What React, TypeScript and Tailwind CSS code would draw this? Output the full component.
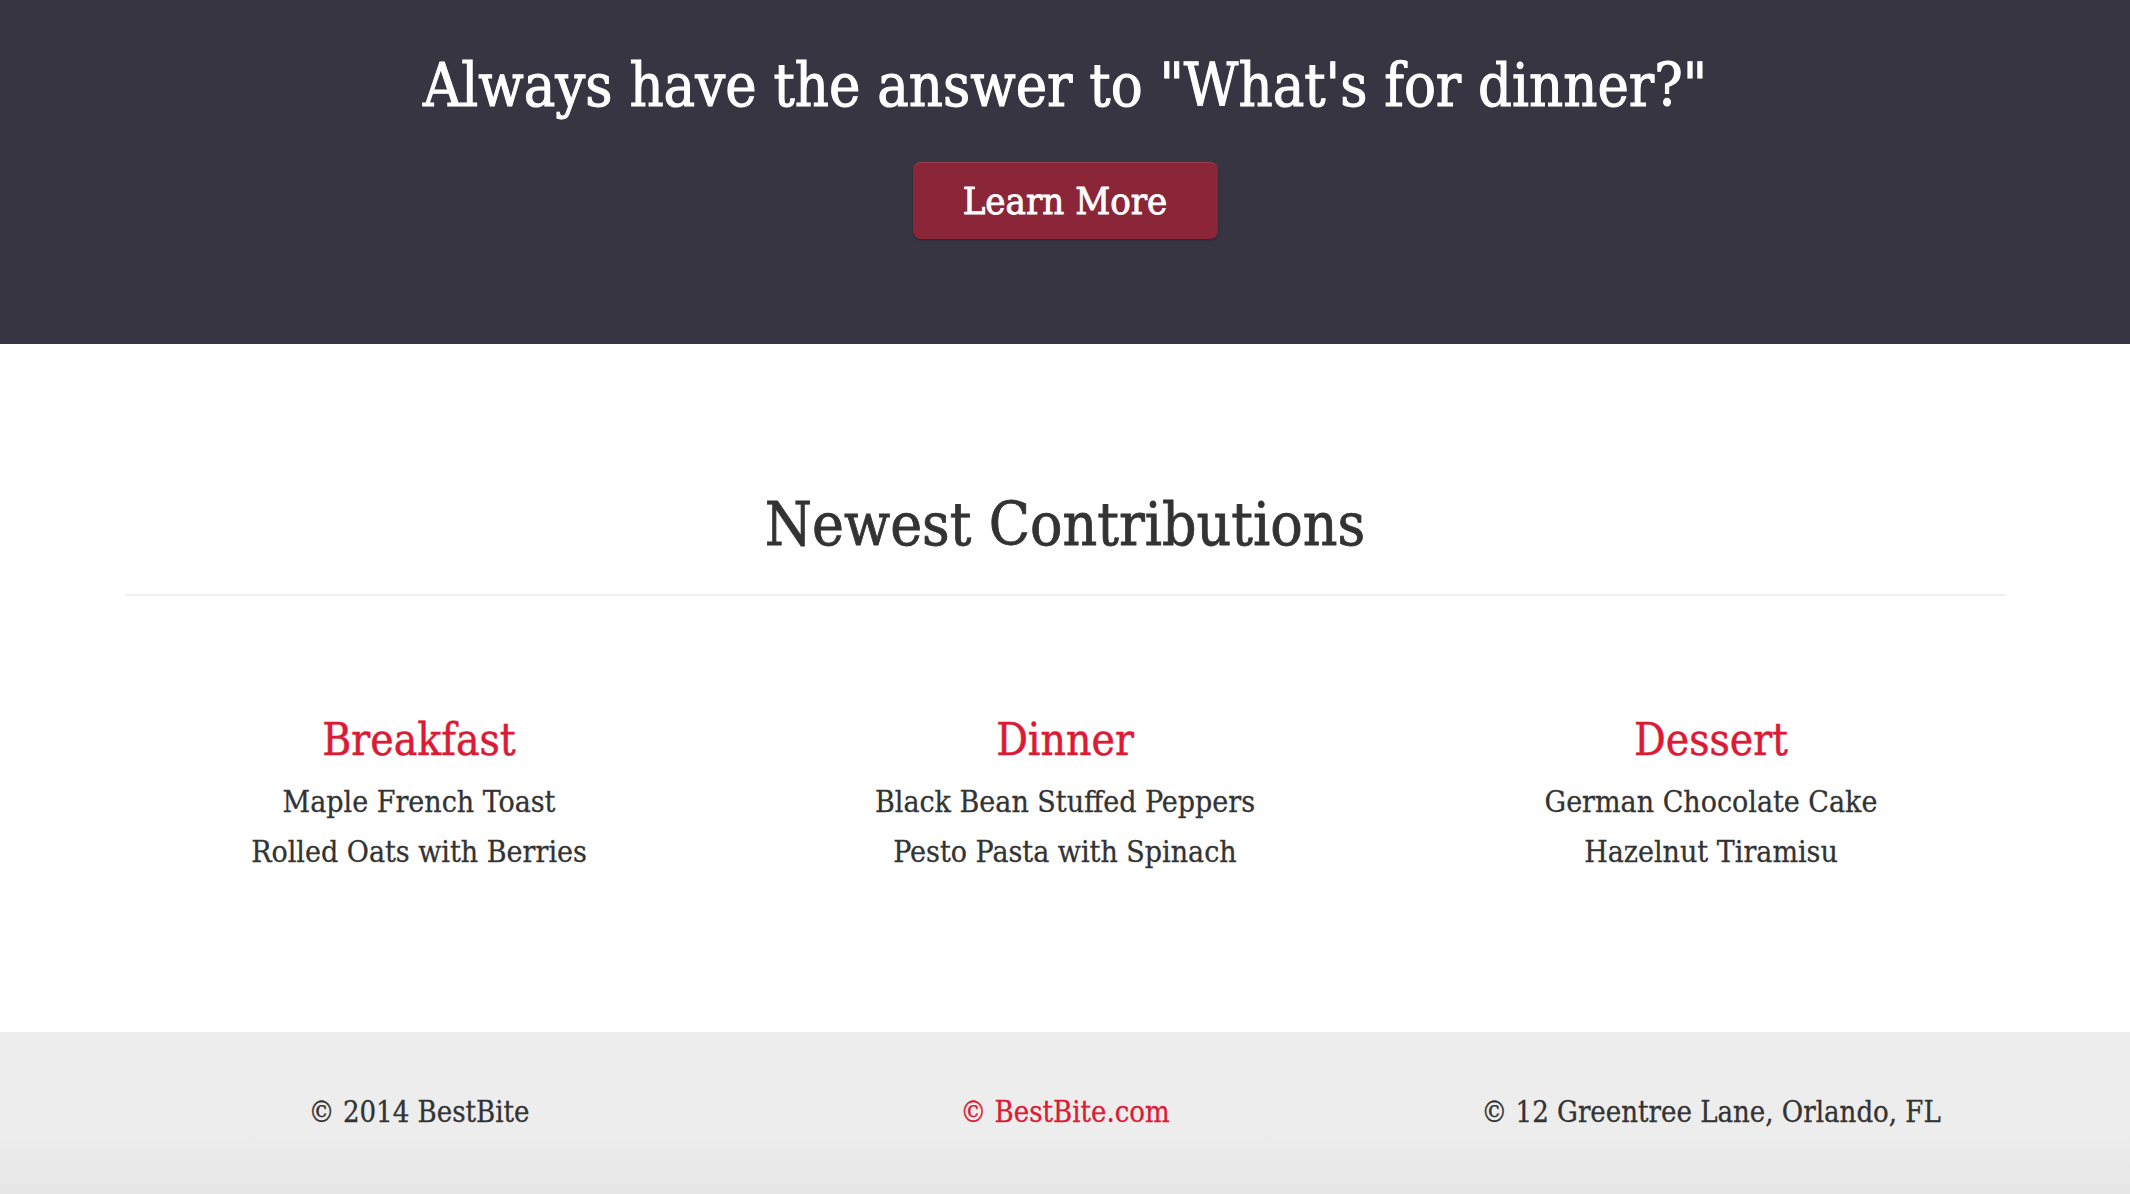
const font = { fontFamily: '"DejaVu Serif Condensed", "DejaVu Serif", serif' };

const categories = [
  { title: "Breakfast", items: ["Maple French Toast", "Rolled Oats with Berries"] },
  { title: "Dinner", items: ["Black Bean Stuffed Peppers", "Pesto Pasta with Spinach"] },
  { title: "Dessert", items: ["German Chocolate Cake", "Hazelnut Tiramisu"] },
];

export default function App() {
  return (
    <div className="min-h-[1194px] bg-white text-[#333]" style={font}>
      {/* Hero */}
      <header className="h-[344px] bg-[#363541] flex flex-col items-center pt-[51px]">
        <h1 className="text-[59px] leading-[70px] text-white [-webkit-text-stroke:1px_currentColor]">
          Always have the answer to "What's for dinner?"
        </h1>
        <button className="mt-[41px] w-[305px] h-[77px] rounded-[8px] bg-[#8a2638] border-t border-[#a0404f] text-white text-[38px] [-webkit-text-stroke:0.8px_currentColor] shadow-[0_1px_2px_rgba(0,0,0,0.3)]">
          Learn More
        </button>
      </header>

      {/* Newest */}
      <section className="h-[688px] flex flex-col items-center">
        <div className="w-[1880px]">
          <h2 className="mt-[145px] text-center text-[60px] leading-[70px] text-[#333] [-webkit-text-stroke:0.8px_currentColor]">
            Newest Contributions
          </h2>
          <div className="mt-[35px] h-[2px] bg-[#eeeeee]" />
        </div>

        <div className="w-[1938px] grid grid-cols-3 mt-[118px]">
          {categories.map((c) => (
            <div key={c.title} className="flex flex-col items-center">
              <h3 className="text-[44px] leading-[52px] text-[#dc1a34] [-webkit-text-stroke:0.5px_currentColor]">
                {c.title}
              </h3>
              <ul className="mt-[11px] flex flex-col items-center text-[30px] leading-[50px] text-[#333] [-webkit-text-stroke:0.3px_currentColor]">
                {c.items.map((i) => (
                  <li key={i}>{i}</li>
                ))}
              </ul>
            </div>
          ))}
        </div>
      </section>

      {/* Footer */}
      <footer className="h-[162px] bg-[linear-gradient(to_bottom,#ededed_60%,#e6e6e6)] flex justify-center">
        <div className="w-[1938px] grid grid-cols-3 pt-[62px] text-[29px] leading-[36px] [-webkit-text-stroke:0.3px_currentColor]">
          <p className="text-center text-[#333]">© 2014 BestBite</p>
          <p className="text-center text-[#dc1a34]">© BestBite.com</p>
          <p className="text-center text-[#333]">© 12 Greentree Lane, Orlando, FL</p>
        </div>
      </footer>
    </div>
  );
}
